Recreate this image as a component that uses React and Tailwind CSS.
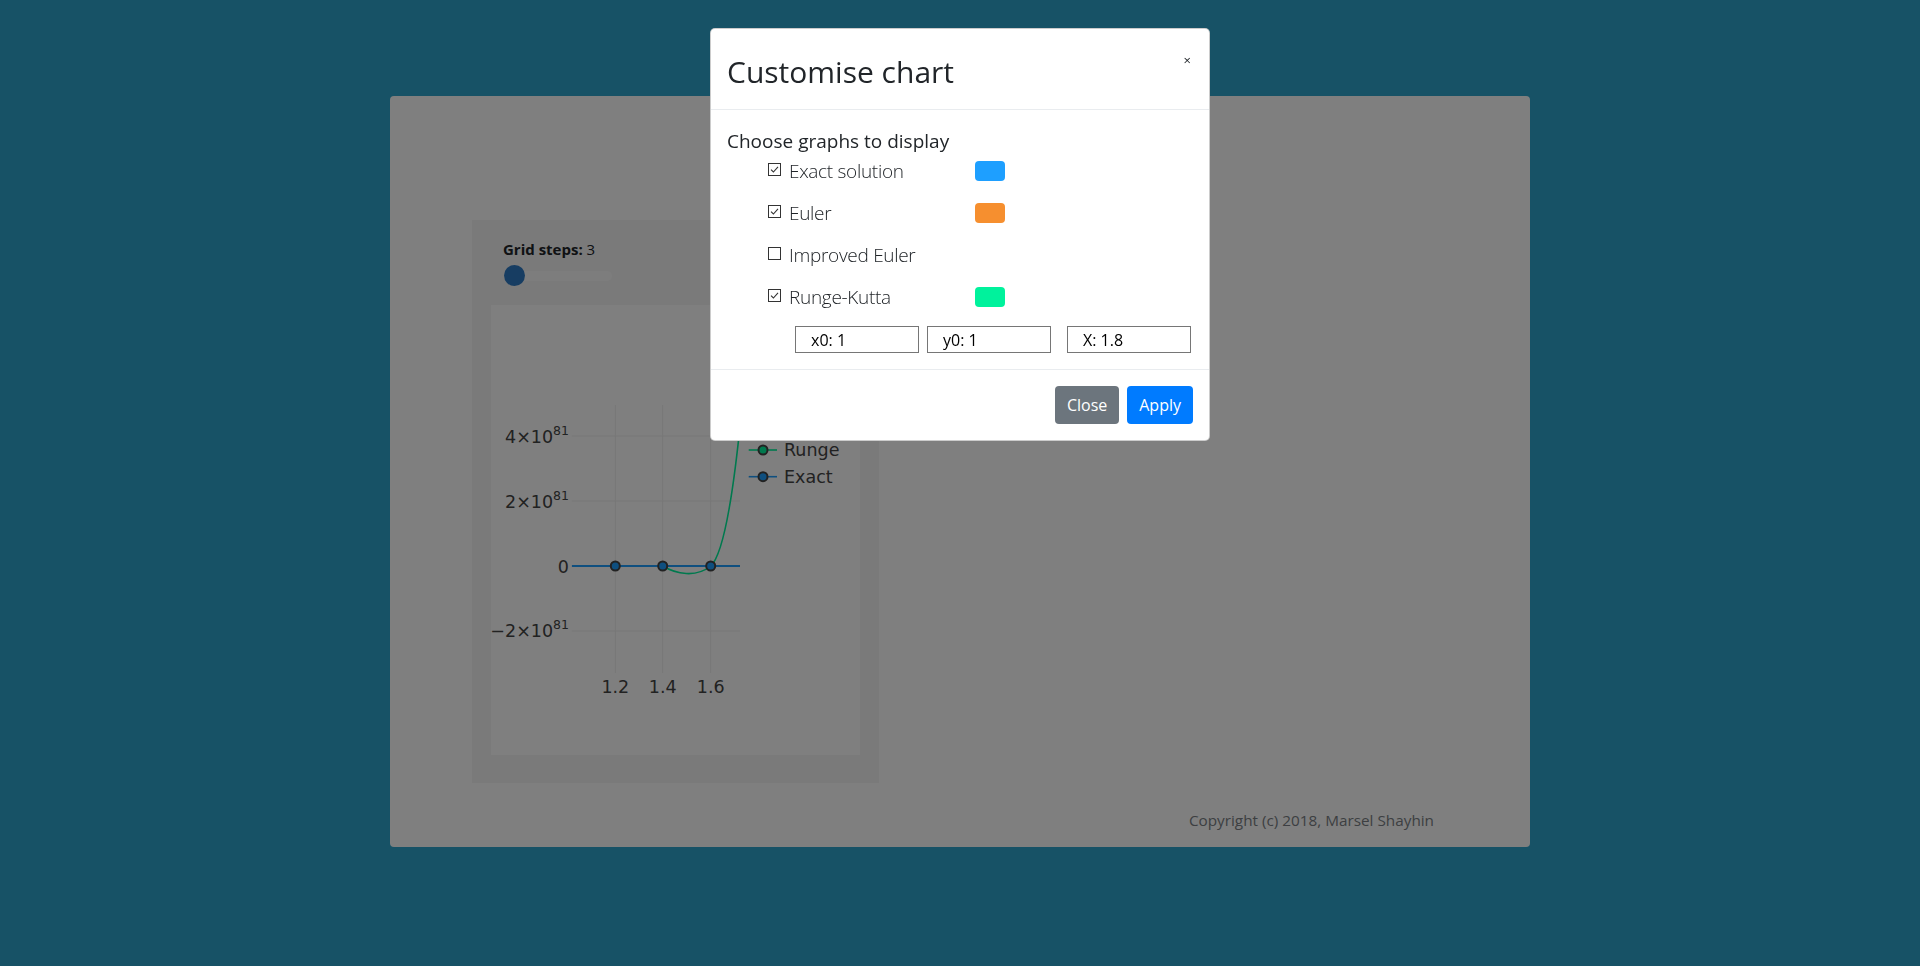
import React from "react";

const graphs = [
  { name: "Exact solution", checked: true, color: "bg-[#1e9fff]" },
  { name: "Euler", checked: true, color: "bg-[#f68f2f]" },
  { name: "Improved Euler", checked: false, color: null },
  { name: "Runge-Kutta", checked: true, color: "bg-[#00f29c]" },
];

const CheckBox = ({ checked }) => (
  <span className="w-[13px] h-[13px] -mt-[3px] border border-[#333] bg-white flex items-center justify-center shrink-0">
    {checked && (
      <svg width="9" height="9" viewBox="0 0 9 9">
        <path d="M1 4.6 L3.4 7 L8 1.8" fill="none" stroke="#333" strokeWidth="1.1" />
      </svg>
    )}
  </span>
);

const Chart = () => {
  const xs = [124.3, 171.7, 219.7];
  const ys = [131, 196, 261, 326];
  return (
    <svg width="369" height="450" className="block" style={{ fontFamily: "'DejaVu Sans', Verdana, sans-serif" }}>
      <defs>
        <clipPath id="plotclip">
          <rect x="80.7" y="100" width="168.3" height="268" />
        </clipPath>
      </defs>
      {xs.map((x) => (
        <line key={x} x1={x} x2={x} y1="100" y2="368" stroke="#eeeeee" strokeWidth="1" />
      ))}
      {ys.map((y) => (
        <line key={y} x1="80.7" x2="249" y1={y} y2={y} stroke="#eeeeee" strokeWidth="1" />
      ))}
      <g fill="#444" fontSize="17.5">
        {[
          [137.7, "4"],
          [202.7, "2"],
          [332, "−2"],
        ].map(([y, n]) => (
          <text key={y} x="78" y={y} textAnchor="end">
            {n}×10<tspan fontSize="12.5" dy="-8">81</tspan>
          </text>
        ))}
        <text x="78" y="267.5" textAnchor="end">0</text>
        {["1.2", "1.4", "1.6"].map((t, i) => (
          <text key={t} x={xs[i]} y="388" textAnchor="middle">{t}</text>
        ))}
      </g>
      <g clipPath="url(#plotclip)">
        <path
          d="M171.7 261 C185 269 205 273 219.7 261 C232 250 243 190 252 90"
          fill="none"
          stroke="#00f29c"
          strokeWidth="1.6"
        />
        <line x1="80.7" x2="249" y1="261" y2="261" stroke="#1e9fff" strokeWidth="2" />
        {xs.map((x) => (
          <circle key={x} cx={x} cy="261" r="4.5" fill="#1e9fff" stroke="#444" strokeWidth="2" />
        ))}
      </g>
      <g fontSize="17.5" fill="#444">
        <line x1="257.7" x2="286" y1="145" y2="145" stroke="#00f29c" strokeWidth="1.6" />
        <circle cx="272" cy="145" r="4.5" fill="#00f29c" stroke="#444" strokeWidth="2" />
        <text x="293" y="151">Runge</text>
        <line x1="257.7" x2="286" y1="171.7" y2="171.7" stroke="#1e9fff" strokeWidth="1.6" />
        <circle cx="272" cy="171.7" r="4.5" fill="#1e9fff" stroke="#444" strokeWidth="2" />
        <text x="293" y="177.7">Exact</text>
      </g>
    </svg>
  );
};

const App = () => {
  return (
    <div className="min-h-screen bg-[#2ea4cc] font-['Open_Sans',sans-serif] text-[#212529] relative">
      <div className="w-[1140px] mx-auto pt-[96px]">
        <div className="h-[751px] bg-white rounded-[4px] flex flex-col">
          <div className="ml-[82px] mt-[124px] w-[407px] h-[563px] bg-[#f4f4f4] pt-[18px] px-[19px]">
            <div className="pl-[12px] text-[15px] leading-[22px]">
              <span className="font-bold">Grid steps:</span> 3
            </div>
            <div className="ml-[13px] mt-[5px] w-[108px] h-[22px] flex items-center relative">
              <div className="w-full h-[10px] rounded-full bg-[#fbfbfb]" />
              <div className="absolute left-0 top-[0px] w-[21px] h-[21px] rounded-full bg-[#2f7bc4]" />
            </div>
            <div className="mt-[18px] bg-white h-[450px]">
              <Chart />
            </div>
          </div>
          <div className="flex justify-end pr-[96px] mt-[25px] text-[15.3px] leading-[24px] text-[#7a7f84]">
            Copyright (c) 2018, Marsel Shayhin
          </div>
        </div>
      </div>

      <div className="fixed inset-0 bg-black/50" />

      <div className="fixed inset-0 flex justify-center items-start">
        <div className="mt-[28px] w-[500px] bg-white border border-black/20 rounded-[5px] flex flex-col">
          <div className="flex justify-between items-start px-[16px] pt-[19px] pb-[13px] border-b border-[#e9ecef]">
            <h2 className="text-[30px] leading-[48px] font-normal">Customise chart</h2>
            <button className="mt-[6px] mr-[2px] text-[13px] leading-[13px] text-[#212529]">×</button>
          </div>
          <div className="p-[16px] pb-[16px]">
            <div className="text-[19px] leading-[30px]">Choose graphs to display</div>
            {graphs.map((g, i) => (
              <div
                key={g.name}
                className={`flex items-center pl-[41px] h-[30px] ${i < graphs.length - 1 ? "mb-[12px]" : ""}`}
              >
                <CheckBox checked={g.checked} />
                <span className="ml-[8px] w-[186px] text-[19px] tracking-[-0.3px] leading-[30px] font-light">
                  {g.name}
                </span>
                {g.color && <span className={`w-[30px] h-[20px] rounded-[4px] ${g.color}`} />}
              </div>
            ))}
            <div className="flex mt-[14px] ml-[68px]">
              <input
                readOnly
                value="x0: 1"
                className="w-[124px] h-[27px] border border-[#767676] px-[15px] text-[16px] text-black outline-none"
              />
              <input
                readOnly
                value="y0: 1"
                className="ml-[8px] w-[124px] h-[27px] border border-[#767676] px-[15px] text-[16px] text-black outline-none"
              />
              <input
                readOnly
                value="X: 1.8"
                className="ml-[16px] w-[124px] h-[27px] border border-[#767676] px-[15px] text-[16px] text-black outline-none"
              />
            </div>
          </div>
          <div className="flex justify-end gap-[8px] p-[16px] border-t border-[#e9ecef]">
            <button className="h-[38px] px-[12px] rounded-[4px] bg-[#6c757d] text-white text-[16px]">Close</button>
            <button className="h-[38px] px-[12px] rounded-[4px] bg-[#007bff] text-white text-[16px]">Apply</button>
          </div>
        </div>
      </div>
    </div>
  );
};

export default App;
